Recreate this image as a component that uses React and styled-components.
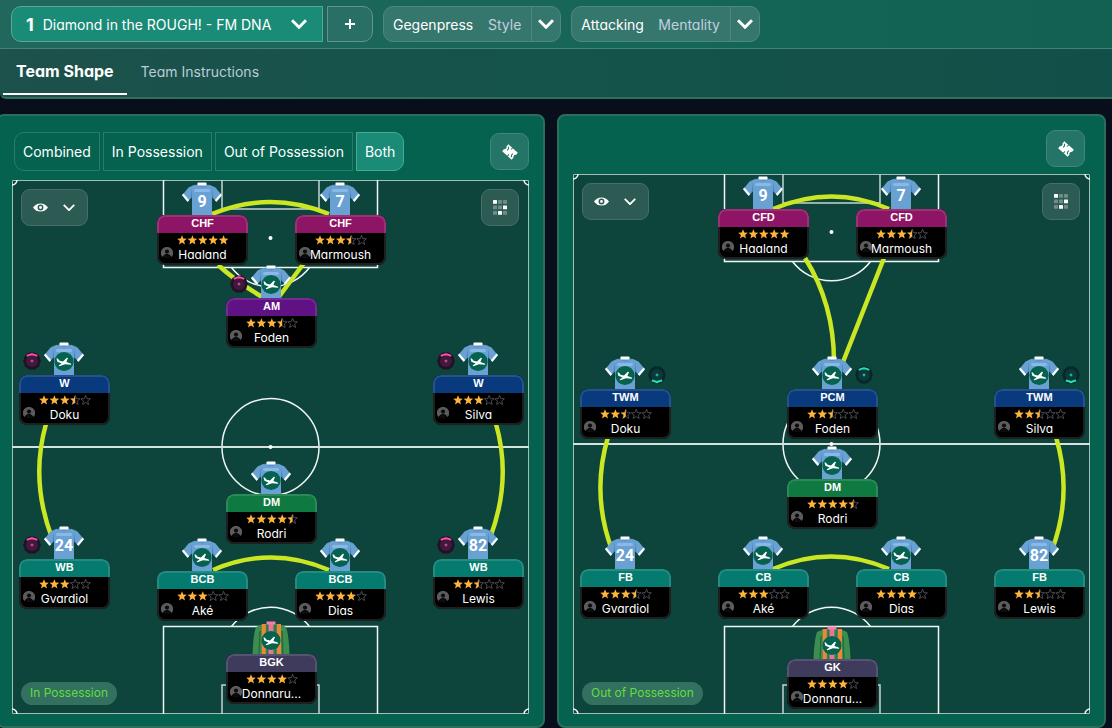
import React from "react";
import styled, { createGlobalStyle } from "styled-components";

const GlobalStyle = createGlobalStyle`
  * {
    box-sizing: border-box;
  }

  body {
    margin: 0;
    background: #080e1b;
    color: #fff;
    font-family: Inter, "Liberation Sans", sans-serif;
    font-feature-settings: "cv11";
  }

  button,
  select {
    font: inherit;
    font-feature-settings: inherit;
    color: inherit;
    margin: 0;
    cursor: pointer;
  }

  svg {
    display: block;
  }
`;

const Page = styled.div`
  display: flex;
  flex-direction: column;
  min-height: 100vh;
  overflow-x: hidden;
`;

/* ---------- header ---------- */

const Header = styled.header`
  border-bottom: 2px solid #30705a;
  border-bottom-left-radius: 6px;
  background: linear-gradient(90deg, #1d514b, #14544a 50%, #124f48);
`;

const TacticBar = styled.div`
  display: flex;
  align-items: center;
  gap: 10px;
  height: 49px;
  padding: 0 11px;
  border-bottom: 1px solid #43827a;
  background: linear-gradient(90deg, #21675c, #156656 60%, #126152);
`;

const TacticGroup = styled.div`
  display: flex;
  gap: 4px;
`;

const TacticField = styled.label`
  display: flex;
  align-items: center;
  gap: 9px;
  width: 312px;
  height: 36px;
  padding: 0 15px 0 14px;
  border: 1px solid #55a998;
  border-radius: 10px 0 0 10px;
  background: #1a8b77;
  font-size: 14px;

  & strong {
    font-size: 18px;
  }
`;

const BareSelect = styled.select`
  appearance: none;
  border: none;
  padding: 0;
  background: transparent;
  outline-offset: 4px;
`;

const TacticSelect = styled(BareSelect)`
  flex: 1;
  min-width: 0;
`;

const AddButton = styled.button`
  display: grid;
  place-items: center;
  width: 46px;
  height: 36px;
  padding: 0;
  border: 1px solid #5f958c;
  border-radius: 0 10px 10px 0;
  background: #2a6f65;
`;

const OptionField = styled.div`
  display: flex;
  align-items: center;
  height: 36px;
  padding-left: 9px;
  border: 1px solid #4e877e;
  border-radius: 10px;
  background: #36776d;
  font-size: 14px;

  & label {
    margin: 0 10px 0 14px;
    color: #c3cfe0;
  }
`;

const OptionArrow = styled.span`
  display: grid;
  place-items: center;
  align-self: stretch;
  width: 29px;
  border-left: 1px solid #4e877e;
`;

const TabBar = styled.nav`
  display: flex;
  height: 48px;
  padding-left: 3px;
`;

const Tab = styled.button`
  height: 46px;
  padding: 0 ${(p) => (p.$active ? 13 : 14)}px;
  border: none;
  border-bottom: 2px solid ${(p) => (p.$active ? "#fff" : "transparent")};
  background: none;
  color: ${(p) => (p.$active ? "#fff" : "#bccbd8")};
  font-size: ${(p) => (p.$active ? 16 : 14)}px;
  font-weight: ${(p) => (p.$active ? 700 : 400)};
`;

/* ---------- panels ---------- */

const Panels = styled.main`
  flex: 1;
  display: grid;
  grid-template-columns: 1fr 1fr;
  gap: 12px;
  margin: 15px 6px 0 -4px;
`;

const Panel = styled.section`
  display: flex;
  flex-direction: column;
  gap: ${(p) => (p.$compact ? 7 : 9)}px;
  min-width: 0;
  padding: ${(p) => (p.$compact ? 14 : 16)}px 14px 12px;
  border: 2px solid #2c6e5a;
  border-radius: 8px;
  background: #04624f;
`;

const Toolbar = styled.div`
  display: flex;
  align-items: center;
  justify-content: space-between;
  padding: ${(p) => (p.$compact ? "0 5px 0 0" : "0 0 0 2px")};
`;

const Segments = styled.div`
  display: flex;
  gap: 3px;
`;

const Segment = styled.button`
  height: 39px;
  padding: 0 8px;
  border: 1px solid ${(p) => (p.$active ? "#4ba897" : "#2c7a68")};
  background: ${(p) => (p.$active ? "#1a8b77" : "transparent")};
  font-size: 14px;
  white-space: nowrap;

  &:first-child {
    border-radius: 10px 0 0 10px;
  }

  &:last-child {
    border-radius: 0 10px 10px 0;
  }
`;

const SquareButton = styled.button`
  display: grid;
  place-items: center;
  width: 39px;
  height: 37px;
  margin-left: auto;
  padding: 0;
  border: 1px solid #3f8777;
  border-radius: 9px;
  background: #247567;
`;

/* ---------- pitch ---------- */

const Field = styled.div`
  position: relative;
  flex: 1;
  min-height: ${(p) => p.$height}px;
  background: #0d453c;
`;

const FieldLines = styled.svg`
  position: absolute;
  inset: 0;
  width: 100%;
  height: 100%;

  & * {
    vector-effect: non-scaling-stroke;
  }
`;

const FieldControls = styled.div`
  position: absolute;
  inset: 9px 10px auto 9px;
  display: flex;
  justify-content: space-between;
`;

const FieldButton = styled.button`
  display: flex;
  align-items: center;
  justify-content: center;
  gap: 15px;
  width: ${(p) => (p.$wide ? 67 : 38)}px;
  height: 37px;
  padding: ${(p) => (p.$wide ? "0 2px 0 0" : 0)};
  border: 1px solid #456f68;
  border-radius: 9px;
  background: #2c5b54;
`;

const PhaseBadge = styled.span`
  position: absolute;
  left: 9px;
  bottom: 9px;
  height: 23px;
  padding: 0 9px;
  border-radius: 12px;
  background: #34705f;
  color: #5fdf3f;
  font-size: 12px;
  line-height: 22px;
`;

/* ---------- player ---------- */

const Token = styled.div`
  position: absolute;
  left: ${(p) => p.$left}%;
  top: ${(p) => p.$top}%;
  width: 91px;
  margin: -33px 0 0 -46px;
`;

const ShirtSlot = styled.div`
  display: flex;
  justify-content: center;
  height: 33px;
  padding-right: 2px;
`;

const Card = styled.div`
  position: relative;
  height: 50px;
  border-radius: 8px;
  overflow: hidden;
  background: #000;
  text-align: center;

  &::after {
    content: "";
    position: absolute;
    inset: 0;
    border: 2px solid rgba(255, 255, 255, 0.12);
    border-radius: 8px;
  }
`;

const Role = styled.div`
  height: 18px;
  background: ${(p) => p.$color};
  font-family: "Liberation Sans", Arial, sans-serif;
  font-size: 11px;
  font-weight: 700;
  line-height: 17px;
`;

const Stars = styled.svg`
  margin: 2px auto 0;
`;

const Name = styled.div`
  font-size: 12px;
  line-height: 19px;
`;

const PersonIcon = styled.svg`
  position: absolute;
  left: 4px;
  bottom: 6px;
`;

const DutyBadge = styled.svg`
  position: absolute;
  top: 10px;
  left: ${(p) => (p.$right ? 68 : 4)}px;
`;

const roleColors = {
  CHF: "#8e1565",
  CFD: "#8e1565",
  AM: "#601183",
  W: "#0a3a7e",
  TWM: "#0a3a7e",
  PCM: "#0a3a7e",
  DM: "#0e7a41",
  WB: "#057b6f",
  FB: "#057b6f",
  BCB: "#057b6f",
  CB: "#057b6f",
  BGK: "#3f3b5d",
  GK: "#3f3b5d",
};

// x and y are the middle of the card's top edge, in field units
const inPossession = {
  height: 534,
  links: [
    "M200 34Q258 10 317 34",
    "M206 85Q226 103 252 118",
    "M292 83L266 118",
    "M34 244Q18 300 40 358",
    "M484 244Q500 300 478 358",
    "M201 390Q259 365 317 390",
  ],
  players: [
    { name: "Haaland", role: "CHF", stars: 5, number: 9, x: 191, y: 35 },
    { name: "Marmoush", role: "CHF", stars: 3.5, number: 7, x: 329, y: 35 },
    { name: "Foden", role: "AM", stars: 3.5, x: 260, y: 118, duty: "attack" },
    { name: "Doku", role: "W", stars: 3.5, x: 53, y: 195, duty: "attack" },
    { name: "Silva", role: "W", stars: 3, x: 467, y: 195, duty: "attack" },
    { name: "Rodri", role: "DM", stars: 4.5, x: 260, y: 314 },
    { name: "Gvardiol", role: "WB", stars: 3, number: 24, x: 53, y: 379, duty: "attack" },
    { name: "Lewis", role: "WB", stars: 2.5, number: 82, x: 467, y: 379, duty: "attack" },
    { name: "Aké", role: "BCB", stars: 3, x: 191, y: 391 },
    { name: "Dias", role: "BCB", stars: 4, x: 329, y: 391 },
    { name: "Donnaru...", role: "BGK", stars: 4, x: 260, y: 474, keeper: true },
  ],
};

const outOfPossession = {
  height: 540,
  links: [
    "M200 35Q259 10 316 35",
    "M232 84Q261 130 261 188",
    "M311 84L270 188",
    "M35 263Q18 320 39 376",
    "M483 263Q500 320 479 376",
    "M200 395Q258 370 316 395",
  ],
  players: [
    { name: "Haaland", role: "CFD", stars: 5, number: 9, x: 191, y: 35 },
    { name: "Marmoush", role: "CFD", stars: 3.5, number: 7, x: 329, y: 35 },
    { name: "Doku", role: "TWM", stars: 2.5, x: 53, y: 215, duty: "drop" },
    { name: "Foden", role: "PCM", stars: 2.5, x: 260, y: 215, duty: "press" },
    { name: "Silva", role: "TWM", stars: 2.5, x: 467, y: 215, duty: "drop" },
    { name: "Rodri", role: "DM", stars: 4.5, x: 260, y: 305 },
    { name: "Gvardiol", role: "FB", stars: 3.5, number: 24, x: 53, y: 395 },
    { name: "Aké", role: "CB", stars: 3, x: 191, y: 395 },
    { name: "Dias", role: "CB", stars: 4, x: 329, y: 395 },
    { name: "Lewis", role: "FB", stars: 2.5, number: 82, x: 467, y: 395 },
    { name: "Donnaru...", role: "GK", stars: 4, x: 260, y: 485, keeper: true },
  ],
};

function Chevron({ width = 16, stroke = 3 }) {
  return (
    <svg width={width} height={width * 0.625} viewBox="0 0 16 10" fill="none" stroke="#fff" strokeWidth={stroke} aria-hidden="true">
      <path d="M1 1.2L8 8.2L15 1.2" />
    </svg>
  );
}

function EyeIcon() {
  return (
    <svg width="15" height="9" viewBox="0 0 15 9" aria-hidden="true">
      <path d="M0 4.5C2 1.6 4.6 .4 7.5 .4S13 1.6 15 4.5C13 7.4 10.4 8.6 7.5 8.6S2 7.4 0 4.5Z" fill="#fff" />
      <circle cx="7.5" cy="4.5" r="2.2" fill="#fff" stroke="#2c5b54" strokeWidth="1.5" />
    </svg>
  );
}

function GridIcon() {
  const bright = [0, 5, 7];
  return (
    <svg width="14" height="15" viewBox="0 0 14 15" aria-hidden="true">
      {Array.from({ length: 9 }, (_, i) => (
        <rect
          key={i}
          x={(i % 3) * 5}
          y={Math.floor(i / 3) * 5.5}
          width="4"
          height="3.8"
          rx="0.6"
          fill={bright.includes(i) ? "#fff" : "#6f8d88"}
        />
      ))}
    </svg>
  );
}

function BoardIcon() {
  return (
    <svg width="16" height="16" viewBox="0 0 16 16" aria-hidden="true">
      <g transform="rotate(42 8 8)">
        <path
          d="M1.6 3.4H14.4V6.2C13 6.4 13 9.6 14.4 9.8V12.6H1.6V9.8C3 9.6 3 6.4 1.6 6.2Z"
          fill="#fff"
        />
        <path d="M7.2 3.2V5.4M8.8 10.4V12.8" stroke="#247567" strokeWidth="1" />
        <path d="M3.2 5.2Q5.4 6 4.8 8.8M12.8 10.8Q10.6 10 11.2 7.2" fill="none" stroke="#247567" strokeWidth="1" />
      </g>
    </svg>
  );
}

function Crest() {
  return (
    <g>
      <circle cx="20" cy="19.5" r="9.6" fill="#04624f" />
      <path
        d="M12.4 16.4L13.8 16.6L15.6 18.8L19 19.4L22.8 15.8L24 16L22.4 20L26.6 21.4Q27.8 22.2 27 22.8L21 22.2L15.4 24.2L14.6 23.6L17.6 21.4L13.4 19.8Z"
        fill="#fff"
      />
    </g>
  );
}

function Shirt({ number }) {
  return (
    <svg width="40" height="34" viewBox="0 0 40 34" aria-hidden="true">
      <path d="M12 3L6.5 5.5L0 13.5L5.5 20L10 15V34H30V15L34.5 20L40 13.5L33.5 5.5L28 3Z" fill="#69a1d3" />
      <path d="M9.6 6L8.6 16.4L10 15ZM30.4 6L31.4 16.4L30 15Z" fill="#4c84ba" />
      <path d="M12 3L20 5.4L28 3L24 2.4H16Z" fill="#5a90c4" />
      <rect x="12" y="7" width="16" height="3" rx="1.5" fill="#8ab9e8" />
      <rect x="15.5" y="0.5" width="9" height="3" rx="0.6" fill="#fff" />
      <path d="M0 13L5.6 19.8L7.2 18.2L1.4 11.4ZM40 13L34.4 19.8L32.8 18.2L38.6 11.4Z" fill="#fff" />
      {number ? (
        <text x="20" y="25" textAnchor="middle" fontFamily="Roboto, sans-serif" fontWeight="700" fontSize="16" fill="#fff">
          {number}
        </text>
      ) : (
        <Crest />
      )}
    </svg>
  );
}

function KeeperShirt() {
  return (
    <svg width="40" height="34" viewBox="0 0 40 34" aria-hidden="true">
      <path d="M12 3L5 6Q2 14 1.5 34H38.5Q38 14 35 6L28 3Z" fill="#3c8e50" />
      <path d="M9 10L8 34M31 10L32 34" stroke="#256b3c" strokeWidth="1.4" />
      <path d="M12.8 3V34M28 3V34" stroke="#ee8638" strokeWidth="4" />
      <path d="M20 1V34" stroke="#f0709b" strokeWidth="4.6" />
      <path d="M16.2 3V34M24.2 3V34" stroke="#2c7a42" strokeWidth="1.6" />
      <rect x="15.5" y="0.5" width="9" height="3" fill="#f77ea8" />
      <Crest />
    </svg>
  );
}

const starShape = "M5 .3L6.3 3.6L9.8 3.8L7.1 6L8 9.5L5 7.6L2 9.5L2.9 6L.2 3.8L3.7 3.6Z";
const halfStarShape = "M5 .3V7.6L2 9.5L2.9 6L.2 3.8L3.7 3.6Z";

function StarRating({ value }) {
  return (
    <Stars width="52" height="10" viewBox="0 0 52 10" role="img" aria-label={`${value} out of 5`}>
      {[0, 1, 2, 3, 4].map((i) => (
        <g key={i} transform={`translate(${i * 10.4} 0)`}>
          {value >= i + 1 ? (
            <path d={starShape} fill="#ffb43c" />
          ) : (
            <path d={starShape} fill="none" stroke="#666671" strokeWidth="0.7" />
          )}
          {value === i + 0.5 && <path d={halfStarShape} fill="#ffb43c" />}
        </g>
      ))}
    </Stars>
  );
}

function Duty({ kind }) {
  const attack = kind === "attack";
  const accent = attack ? "#ff50aa" : "#22e0b4";
  return (
    <DutyBadge $right={!attack} width="18" height="18" viewBox="0 0 18 18" role="img" aria-label={kind}>
      <path
        d="M6 .4H12L16 3.4L17.8 9L16 14.6L12 17.6H6L2 14.6L.2 9L2 3.4Z"
        fill={attack ? "#230f26" : "#08272a"}
      />
      <circle cx="9" cy="9" r="6" fill={attack ? "#3f1a3c" : "#0c3a3a"} />
      <path
        d={kind === "drop" ? "M3.8 14.6Q6 15 9 16.2Q12 15 14.2 14.6" : "M3.8 4Q6 2.6 9 2.2Q12 2.6 14.2 4"}
        fill="none"
        stroke={accent}
        strokeWidth="2"
      />
      <path d="M9 7.6V10.4M7.6 9H10.4" stroke={accent} strokeWidth="1" />
    </DutyBadge>
  );
}

function Player({ player, height }) {
  return (
    <Token $left={(player.x / 517) * 100} $top={(player.y / height) * 100}>
      <ShirtSlot>{player.keeper ? <KeeperShirt /> : <Shirt number={player.number} />}</ShirtSlot>
      {player.duty && <Duty kind={player.duty} />}
      <Card>
        <Role $color={roleColors[player.role]}>{player.role}</Role>
        <StarRating value={player.stars} />
        <PersonIcon width="12" height="12" viewBox="0 0 12 12" aria-hidden="true">
          <path d="M6 0A6 6 0 0 0 1.4 10L3.2 8Q4.4 7 6 7T8.8 8L10.6 10A6 6 0 0 0 6 0Z" fill="#5c5c5e" />
          <circle cx="6" cy="4.6" r="2.1" fill="#0c0c0c" />
          <path d="M2.6 11Q3 7.6 6 7.6T9.4 11Z" fill="#0c0c0c" />
        </PersonIcon>
        <Name>{player.name}</Name>
      </Card>
    </Token>
  );
}

function Pitch({ shape, phase }) {
  const h = shape.height;
  return (
    <Field $height={h}>
      <FieldLines viewBox={`0 0 517 ${h}`} preserveAspectRatio="none" fill="none" aria-hidden="true">
        <rect x="0.5" y="0.5" width="516" height={h - 1} stroke="#a3bdb7" />
        <g stroke="#f2f7f5" strokeWidth="1.5">
          <path d={`M151.5 0V87.5H365.5V0M151.5 ${h}V${h - 87.5}H365.5V${h}`} />
          <path d={`M210 0V29H307V0M210 ${h}V${h - 29}H307V${h}`} stroke="#c3d3cf" />
          <path d={`M219.5 87.5A49 49 0 0 0 297.5 87.5M219.5 ${h - 87.5}A49 49 0 0 1 297.5 ${h - 87.5}`} />
          <circle cx="258.5" cy={h / 2} r="48.5" />
          <path d={`M0 ${h / 2}H517`} strokeWidth="2" stroke="#d5e2de" />
          <path d={`M5 0A5 5 0 0 1 0 5M512 0A5 5 0 0 0 517 5M5 ${h}A5 5 0 0 0 0 ${h - 5}M512 ${h}A5 5 0 0 1 517 ${h - 5}`} />
        </g>
        <circle cx="258.5" cy="58" r="2" fill="#fff" />
        <circle cx="258.5" cy={h / 2} r="2" fill="#fff" />
        {shape.links.map((d) => (
          <path key={d} d={d} stroke="#cbe623" strokeWidth="4.5" />
        ))}
      </FieldLines>
      {shape.players.map((player) => (
        <Player key={player.name} player={player} height={h} />
      ))}
      <FieldControls>
        <FieldButton $wide aria-label="View options">
          <EyeIcon />
          <Chevron width={12} stroke={2.4} />
        </FieldButton>
        <FieldButton aria-label="Positions">
          <GridIcon />
        </FieldButton>
      </FieldControls>
      <PhaseBadge>{phase}</PhaseBadge>
    </Field>
  );
}

function Option({ id, value, label }) {
  return (
    <OptionField>
      <BareSelect id={id}>
        <option>{value}</option>
      </BareSelect>
      <label htmlFor={id}>{label}</label>
      <OptionArrow>
        <Chevron />
      </OptionArrow>
    </OptionField>
  );
}

export default function App() {
  return (
    <Page>
      <GlobalStyle />
      <Header>
        <TacticBar>
          <TacticGroup>
            <TacticField>
              <strong>1</strong>
              <TacticSelect aria-label="Tactic">
                <option>Diamond in the ROUGH! - FM DNA</option>
              </TacticSelect>
              <Chevron />
            </TacticField>
            <AddButton aria-label="Add tactic">
              <svg width="10" height="10" viewBox="0 0 10 10" stroke="#fff" strokeWidth="2" aria-hidden="true">
                <path d="M5 0V10M0 5H10" />
              </svg>
            </AddButton>
          </TacticGroup>
          <Option id="style" value="Gegenpress" label="Style" />
          <Option id="mentality" value="Attacking" label="Mentality" />
        </TacticBar>
        <TabBar>
          <Tab $active aria-current="page">
            Team Shape
          </Tab>
          <Tab>Team Instructions</Tab>
        </TabBar>
      </Header>
      <Panels>
        <Panel>
          <Toolbar>
            <Segments>
              <Segment>Combined</Segment>
              <Segment>In Possession</Segment>
              <Segment>Out of Possession</Segment>
              <Segment $active aria-pressed="true">
                Both
              </Segment>
            </Segments>
            <SquareButton aria-label="Tactics board">
              <BoardIcon />
            </SquareButton>
          </Toolbar>
          <Pitch shape={inPossession} phase="In Possession" />
        </Panel>
        <Panel $compact>
          <Toolbar $compact>
            <SquareButton aria-label="Tactics board">
              <BoardIcon />
            </SquareButton>
          </Toolbar>
          <Pitch shape={outOfPossession} phase="Out of Possession" />
        </Panel>
      </Panels>
    </Page>
  );
}
